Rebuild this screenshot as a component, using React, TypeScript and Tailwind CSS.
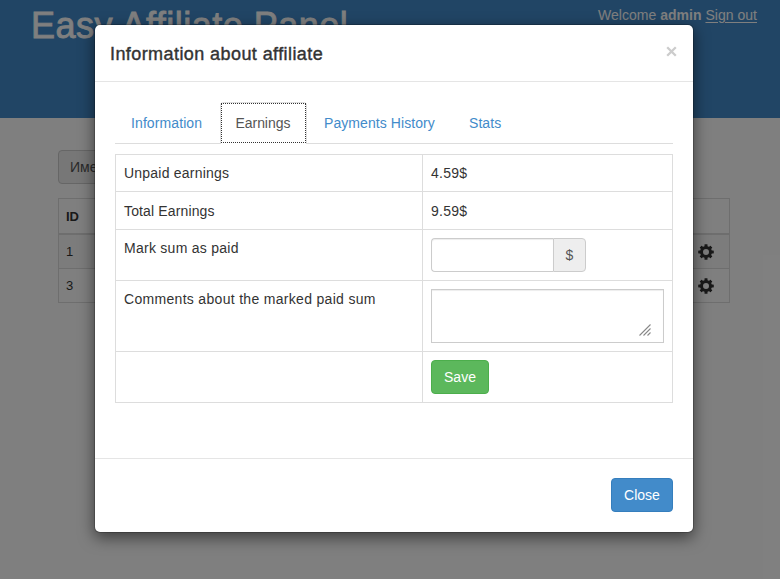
import React from "react";

function Cog() {
  return (
    <svg viewBox="-8 -8 16 16" className="block h-4 w-4" fill="#333">
      {[0, 45, 90, 135].map((a) => (
        <rect key={a} x="-1.5" y="-7.8" width="3" height="15.6" rx="0.4" transform={`rotate(${a})`} mask="url(#hub)" />
      ))}
      <circle r="4.5" fill="none" stroke="#333" strokeWidth="3" />
      <defs>
        <mask id="hub" maskUnits="userSpaceOnUse" x="-8" y="-8" width="16" height="16">
          <rect x="-8" y="-8" width="16" height="16" fill="#fff" />
          <circle r="4" fill="#000" />
        </mask>
      </defs>
    </svg>
  );
}

function Row({ id, striped }: { id: number; striped?: boolean }) {
  return (
    <div className={`flex h-[34px] items-center justify-between border-b border-[#ddd] pr-[15px] pl-[7px] ${striped ? "bg-[#f9f9f9]" : ""}`}>
      <span className="text-[13px]">{id}</span>
      <Cog />
    </div>
  );
}

function Page() {
  return (
    <div className="h-full bg-white">
      <header className="flex h-[118px] items-start justify-between bg-[#428bca] pr-[23px] pl-[31px] text-white">
        <h1 className="pt-[6px] text-[36px] leading-[40px] tracking-[0.48px] [-webkit-text-stroke:0.8px_#fff]">Easy Affiliate Panel</h1>
        <p className="pt-[5px] text-[14px] leading-5 tracking-[0.02px]">
          Welcome <b>admin</b> <u className="underline-offset-2">Sign out</u>
        </p>
      </header>
      <main className="pt-8 pl-[58px]">
        <div className="flex h-[34px] w-[200px] items-center rounded border border-[#ccc] bg-[#eee] pl-[11px] text-[14px] text-[#555]">Имена</div>
        <div className="mt-[14px] w-[672px] border border-b-0 border-[#ddd] text-[#333]">
          <div className="flex h-[36px] items-center border-b-2 border-[#ddd] pt-[2px] pl-[7px] text-[13px] font-bold">ID</div>
          <Row id={1} striped />
          <Row id={3} />
        </div>
      </main>
    </div>
  );
}

function Tabs() {
  return (
    <nav className="flex h-[42px] border-b border-[#ddd] text-[14px] leading-5 text-[#428bca]">
      <a className="mr-[2px] w-[103px] pt-[11px] pl-4 tracking-[0.1px]">Information</a>
      <a className="mr-[2px] -mb-px w-[87px] rounded-t border border-b-0 border-[#ddd] bg-white text-[#555]">
        <span className="flex h-[40px] w-[85px] border border-dotted border-[#333] pt-[9px] pl-[13.5px] tracking-[-0.05px]">Earnings</span>
      </a>
      <a className="mr-[2px] w-[143px] pt-[11px] pl-[15px] tracking-[0.07px]">Payments History</a>
      <a className="pt-[11px] pl-[15px] tracking-[0.07px]">Stats</a>
    </nav>
  );
}

function Line({ label, h, spacing, children }: { label: string; h: string; spacing: string; children: React.ReactNode }) {
  return (
    <div className={`flex border-b border-[#ddd] ${h}`}>
      <div className={`w-[307px] border-r border-[#ddd] pt-2 pl-2 ${spacing}`}>{label}</div>
      <div className="flex-1 p-2">{children}</div>
    </div>
  );
}

function Dialog() {
  return (
    <section className="absolute top-6 left-[94px] flex h-[509px] w-[600px] flex-col rounded-md border border-black/20 bg-white bg-clip-padding shadow-[0_5px_15px_rgba(0,0,0,0.5)]">
      <header className="flex h-[57px] items-start justify-between border-b border-[#e5e5e5] pr-[16px] pl-[15px]">
        <h4 className="pt-[16px] text-[18px] leading-[26px] tracking-[0.42px] [-webkit-text-stroke:0.4px_#333] [font-variant-ligatures:none]">Information about affiliate</h4>
        <svg className="mt-[21px] h-[11px] w-[11px]" viewBox="0 0 11 11" stroke="#ccc" strokeWidth="2.3">
          <path d="M1.2 1.2 9.8 9.8M9.8 1.2 1.2 9.8" />
        </svg>
      </header>
      <div className="flex-1 px-5 pt-5">
        <Tabs />
        <div className="mt-[10px] w-[558px] border border-b-0 border-[#ddd] text-[14px] leading-5">
          <Line label="Unpaid earnings" h="h-[37px]" spacing="tracking-[0.22px]"><span className="tracking-[0.25px]">4.59$</span></Line>
          <Line label="Total Earnings" h="h-[38px] pt-px [&>div:first-child]:-mt-px [&>div:first-child]:pt-[9px] [&>div:last-child]:pb-0" spacing="tracking-[0.14px]"><span className="tracking-[0.25px]">9.59$</span></Line>
          <Line label="Mark sum as paid" h="h-[51px]" spacing="tracking-[0.27px]">
            <div className="flex h-[34px] w-[155px]">
              <input className="w-[122px] rounded-l border border-r-0 border-[#ccc] shadow-[inset_0_1px_1px_rgba(0,0,0,0.075)]" />
              <span className="flex flex-1 items-center justify-center rounded-r border border-[#ccc] bg-[#eee] text-[#555]">$</span>
            </div>
          </Line>
          <Line label="Comments about the marked paid sum" h="h-[71px]" spacing="tracking-[0.31px]">
            <div className="flex h-[54px] w-[233px] items-end justify-end border border-[#ccc] pr-[12px] pb-[6px] shadow-[inset_0_1px_1px_rgba(0,0,0,0.075)]">
              <svg className="h-[12px] w-[12px]" viewBox="0 0 12 12" stroke="#888" strokeWidth="1.1">
                <path d="M.5 11.5 11.5.5M4.5 11.5l7-7M8.5 11.5l3-3" />
              </svg>
            </div>
          </Line>
          <Line label="" h="h-[51px]" spacing="">
            <button className="block h-[34px] w-[58px] rounded border border-[#4cae4c] bg-[#5cb85c] text-white">Save</button>
          </Line>
        </div>
      </div>
      <footer className="flex h-[74px] justify-end border-t border-[#e5e5e5] pt-[19px] pr-5">
        <button className="h-[34px] w-[62px] rounded border border-[#357ebd] bg-[#428bca] text-[14px] text-white">Close</button>
      </footer>
    </section>
  );
}

export default function App() {
  return (
    <div className="relative h-[579px] w-[780px] overflow-hidden font-['Liberation_Sans',Arial,sans-serif] text-[#333]">
      <Page />
      <div className="absolute inset-0 bg-black/50" />
      <Dialog />
    </div>
  );
}
